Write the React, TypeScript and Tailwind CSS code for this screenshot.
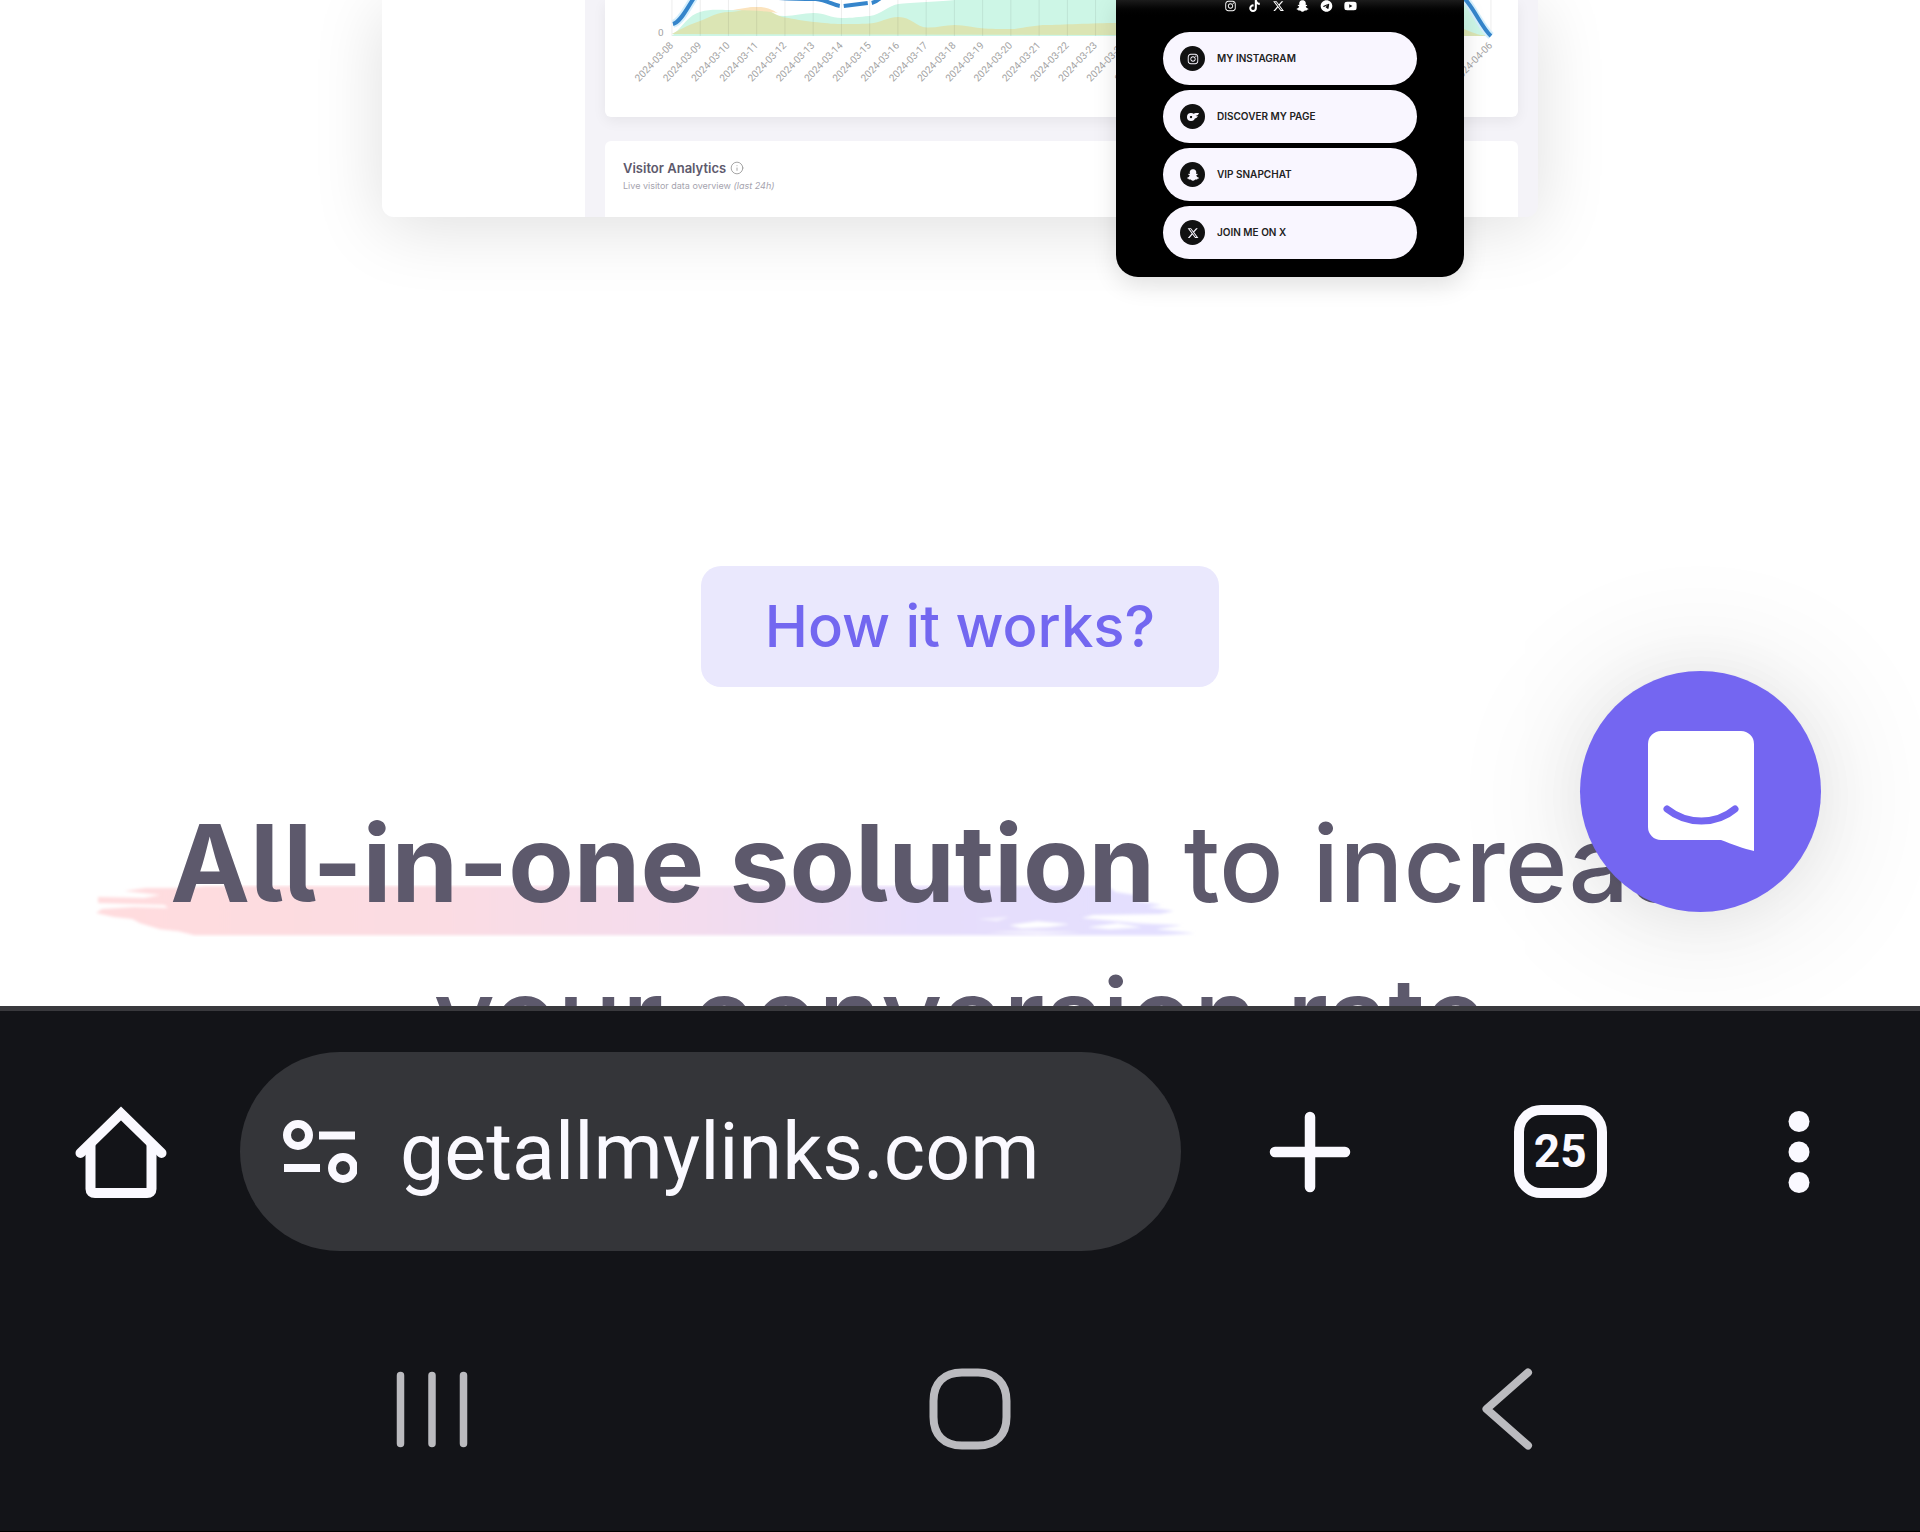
import React, { useState } from 'react';
import { FaInstagram, FaTelegram, FaTiktok, FaXTwitter, FaYoutube } from 'react-icons/fa6';
import { FaSnapchatGhost } from 'react-icons/fa';
import { SiOnlyfans } from 'react-icons/si';
import { Info } from 'lucide-react';

const socials = [
  { name: 'Instagram', Icon: FaInstagram },
  { name: 'TikTok', Icon: FaTiktok },
  { name: 'X', Icon: FaXTwitter },
  { name: 'Snapchat', Icon: FaSnapchatGhost },
  { name: 'Telegram', Icon: FaTelegram },
  { name: 'YouTube', Icon: FaYoutube },
];

const links = [
  { label: 'MY INSTAGRAM', Icon: FaInstagram },
  { label: 'DISCOVER MY PAGE', Icon: SiOnlyfans },
  { label: 'VIP SNAPCHAT', Icon: FaSnapchatGhost },
  { label: 'JOIN ME ON X', Icon: FaXTwitter },
];

// 30 days, 8 March to 6 April
const days = Array.from({ length: 30 }, (_, i) =>
  new Date(Date.UTC(2024, 2, 8 + i)).toISOString().slice(0, 10)
);

const tickX = (i: number) => 67 + (i * 820) / 29;

const VisitsChart = () => (
  <svg viewBox="0 0 914 117" className="block w-full" role="img" aria-label="Visits per day">
    <path
      d="M67 36C78 26 84 15 95 12S112 10 124 10C136 10 142 10 152 12S170 16 180 16S198 13 209 13S226 18 237 18S254 17 265 16S284 5 294 4S340 1 350 0H862C872 10 880 28 887 36Z"
      fill="#cdf6e6"
    />
    <path
      d="M67 34C78 28 86 24 95 21S112 12 124 12S142 7 152 7S170 16 180 17.500S198 21 209 22S226 24 237 24S254 24 265 23.500S282 17 294 17S312 27 322 27.500S340 25 350 25S370 28 380 28.500S400 29 407 29S430 25 442 25S490 23 512 23S840 20 860 29S880 34 887 36Z"
      fill="#dbe5b4"
    />
    <path d="M124 10.500C136 9 142 7 152 7S166 9 173 13C162 11 140 10 124 10.500Z" fill="#fbe3bd" />
    {days.map((day, i) => (
      <line key={day} x1={tickX(i)} x2={tickX(i)} y1="0" y2="36" stroke="#000" strokeOpacity="0.08" />
    ))}
    <g fill="none" strokeLinejoin="round">
      <g stroke="#d5effc" strokeWidth="8">
        <path d="M68 24C76 22 82 8 89 -2" />
        <path d="M862 0C870 10 878 28 887 36" />
      </g>
      <g stroke="#3585cb" strokeWidth="4">
        <path d="M68 24C76 22 82 8 89 -2" />
        <path d="M174 -2C190 -1 200 -1 211 -1C222 0 228 5 235 6" />
        <path d="M239 6L263 3" />
        <path d="M267 3C271 2 275 -1 278 -4" />
        <path d="M860 -2C870 8 878 28 887 36" />
      </g>
    </g>
    <g fill="#a3a3a3" fontSize="10" fontFamily="Roboto, sans-serif">
      <text x="53" y="36">0</text>
      {days.map((day, i) => (
        <text key={day} textAnchor="end" transform={`translate(${tickX(i) + 2} 46) rotate(-46)`}>
          {day}
        </text>
      ))}
    </g>
  </svg>
);

const Brush = () => (
  <svg
    viewBox="0 0 1100 52"
    className="absolute -bottom-[9px] -left-[76px] -z-10 w-[1104px] max-w-none"
    aria-hidden="true"
  >
    <defs>
      <linearGradient id="brush" x1="0" x2="1" y1="0" y2="0">
        <stop offset="0" stopColor="#ffdcde" />
        <stop offset="0.300" stopColor="#fbdce2" />
        <stop offset="0.550" stopColor="#f3dcee" />
        <stop offset="0.750" stopColor="#e6ddfb" />
        <stop offset="1" stopColor="#e3e0ff" />
      </linearGradient>
      <filter id="soft">
        <feGaussianBlur stdDeviation="1.5" />
      </filter>
    </defs>
    <g filter="url(#soft)">
      <path
        d="M110 1H1010L1018 7L1050 12L1034 15L1064 20L1050 22L1076 26L1062 29L996 30L984 33L1040 38L1084 40L1058 44L1097 48L1064 50H100L84 46L66 44L46 38L38 34L20 32L2 28L8 24L40 22L74 23L70 20L4 18V12L50 13L66 10L30 6L52 3L96 3Z"
        fill="url(#brush)"
      />
      <g fill="#fff">
        <path d="M912 40L940 36L972 39L950 42L924 43Z" />
        <path d="M990 42L1020 38L1044 42L1012 44Z" />
        <path d="M890 47L930 45L984 47L940 49Z" opacity="0.600" />
        <path d="M880 34L912 32L900 36Z" opacity="0.600" />
      </g>
    </g>
  </svg>
);

const App = () => {
  const [url, setUrl] = useState('getallmylinks.com');

  return (
    <div className="flex h-screen flex-col overflow-hidden bg-white font-[Inter,sans-serif]">
      <main className="relative min-h-0 flex-1 overflow-hidden">
        {/* Dashboard preview */}
        <div className="relative mx-auto w-full max-w-[1156px]">
          <div className="flex rounded-b-xl bg-[#f4f3f8] shadow-[0_10px_70px_rgba(0,0,0,0.13)]">
            <div className="w-[203px] rounded-bl-xl bg-white" />
            <div className="flex flex-1 flex-col gap-6 pl-5 pr-5">
              <div className="rounded-b-md bg-white shadow-[0_4px_14px_rgba(0,0,0,0.06)]">
                <VisitsChart />
              </div>
              <div className="h-[76px] rounded-t-md bg-white px-[18px] pt-[17px]">
                <h3 className="flex items-center gap-1 text-[13px] leading-5 font-semibold text-[#5d596c]">
                  Visitor Analytics
                  <Info className="h-[14px] w-[14px] text-[#999]" strokeWidth={1.5} />
                </h3>
                <p className="text-[9px] leading-4 text-[#a5a3ae]">
                  Live visitor data overview <i>(last 24h)</i>
                </p>
              </div>
            </div>
          </div>

          {/* Phone preview */}
          <div className="absolute top-0 right-[74px] w-[348px] rounded-b-[22px] bg-black bg-linear-to-b from-[#1c1c1c] to-black to-[18px] px-[47px] pb-[18px] shadow-[0_8px_24px_rgba(0,0,0,0.12)]">
            <div className="flex h-8 justify-center gap-[11px] text-white">
              {socials.map(({ name, Icon }) => (
                <a key={name} href="#" aria-label={name} className="h-3">
                  <Icon className="h-3 w-[13px]" />
                </a>
              ))}
            </div>
            <div className="flex flex-col gap-[5px]">
              {links.map(({ label, Icon }) => (
                <a
                  key={label}
                  href="#"
                  className="flex h-[53px] items-center gap-3 rounded-full bg-[#f9f6ff] pl-[17px] text-[10px] font-semibold text-[#222]"
                >
                  <span className="flex h-[25px] w-[25px] items-center justify-center rounded-full bg-[#111]">
                    <Icon className="h-3 w-3 text-[#f9f6ff]" />
                  </span>
                  {label}
                </a>
              ))}
            </div>
          </div>
        </div>

        {/* How it works */}
        <section className="mt-[349px] flex flex-col items-center [font-optical-sizing:none]">
          <span className="rounded-[20px] bg-[#eae8fd] px-16 text-[58px] leading-[121px] font-medium text-[#7367f0]">
            How it works?
          </span>
          <h2 className="isolate mt-[100px] max-w-[1700px] text-center text-[107px] leading-[153px] font-medium text-[#5d596c] [font-feature-settings:'cv05']">
            <b className="relative font-bold">
              All-in-one solution
              <Brush />
            </b>{' '}
            to increase your conversion rate
          </h2>
        </section>

        <button
          aria-label="Open chat"
          className="absolute right-[99px] bottom-[94px] flex h-[241px] w-[241px] items-center justify-center rounded-full bg-[#7466f1] shadow-[0_6px_140px_rgba(0,0,0,0.12),0_4px_60px_rgba(0,0,0,0.05)]"
        >
          <svg viewBox="0 0 106 121" className="h-[121px] w-[106px]">
            <path d="M13 0H93A13 13 0 0 1 106 13V120C96 118 84 113 73 109H13A13 13 0 0 1 0 96V13A13 13 0 0 1 13 0Z" fill="#fff" />
            <path d="M19 78C39 94 68 94 87 78" fill="none" stroke="#7466f1" strokeWidth="7" strokeLinecap="round" />
          </svg>
        </button>
      </main>

      {/* Browser bar */}
      <footer className="border-t-[5px] border-b border-t-[#39393d] border-b-black bg-[#131418] text-[#faf9ff]">
        <div className="flex items-center pt-[41px] pl-[74px]">
          <button aria-label="Home">
            <svg viewBox="0 0 94 94" className="h-[94px] w-[94px]" fill="none" stroke="currentColor" strokeWidth="10">
              <path d="M6.500 48L47 8.500L87.500 48" strokeLinecap="round" strokeLinejoin="miter" />
              <path d="M16.500 40V84Q16.500 88 21 88H73Q77.500 88 77.500 84V40" />
            </svg>
          </button>
          <div className="ml-[72px] flex h-[199px] w-[51%] items-center gap-[43px] rounded-full bg-[#343539] pl-[43px]">
            <button aria-label="Site settings" className="shrink-0">
              <svg viewBox="0 0 74 64" className="h-16 w-[74px]" fill="none" stroke="currentColor" strokeWidth="8">
                <circle cx="15" cy="15" r="11" />
                <path d="M36 15.500H72M1 48H37" />
                <circle cx="60" cy="48" r="11" />
              </svg>
            </button>
            <input
              type="text"
              aria-label="Address"
              value={url}
              onChange={(e) => setUrl(e.target.value)}
              className="h-[120px] w-full min-w-0 bg-transparent font-[Roboto,sans-serif] text-[79px] outline-none"
            />
          </div>
          <div className="flex flex-1 items-center justify-between pr-[91px] pl-[88px]">
            <button aria-label="New tab">
              <svg viewBox="0 0 82 82" className="h-[82px] w-[82px]" fill="none" stroke="currentColor" strokeWidth="10.500" strokeLinecap="round">
                <path d="M41 6V76M6 41H76" />
              </svg>
            </button>
            <button
              aria-label="Switch tabs, 25 open"
              className="flex h-[93px] w-[93px] items-center justify-center rounded-[27px] border-10 border-current font-[Roboto,sans-serif] text-[46px] font-bold"
            >
              25
            </button>
            <button aria-label="More" className="flex w-[60px] justify-center">
              <svg viewBox="0 0 22 82" className="h-[82px] w-[22px]" fill="currentColor">
                <circle cx="11" cy="10.500" r="10.500" />
                <circle cx="11" cy="41" r="10.500" />
                <circle cx="11" cy="71.500" r="10.500" />
              </svg>
            </button>
          </div>
        </div>

        {/* System navigation */}
        <nav className="flex justify-between pt-[117px] pr-[19%] pb-[81px] pl-[20%] text-[#bbbbbf]">
          <button aria-label="Recent apps" className="flex w-24 justify-center">
            <svg viewBox="0 0 82 82" className="h-[82px] w-[82px]" stroke="currentColor" strokeWidth="7.500" strokeLinecap="round">
              <path d="M9.500 7.500V75.500M41 7.500V75.500M72.500 7.500V75.500" />
            </svg>
          </button>
          <button aria-label="Home screen" className="flex w-24 justify-center">
            <svg viewBox="0 0 82 82" className="h-[82px] w-[82px]" fill="none" stroke="currentColor" strokeWidth="8">
              <path d="M33 4.500H49C67 4.500 77.500 15 77.500 33V49C77.500 67 67 77.500 49 77.500H33C15 77.500 4.500 67 4.500 49V33C4.500 15 15 4.500 33 4.500Z" />
            </svg>
          </button>
          <button aria-label="Back" className="flex w-24 justify-center">
            <svg viewBox="0 0 82 82" className="h-[82px] w-[82px]" fill="none" stroke="currentColor" strokeWidth="8" strokeLinecap="round" strokeLinejoin="round">
              <path d="M62 4.500L20.500 41L62 77.500" />
            </svg>
          </button>
        </nav>
      </footer>
    </div>
  );
};

export default App;
